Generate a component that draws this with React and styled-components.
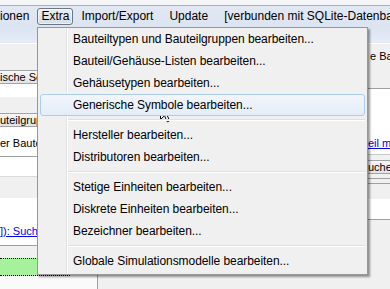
import React from 'react';
import styled, { createGlobalStyle, css } from 'styled-components';

const GlobalStyle = createGlobalStyle`
  html, body { margin: 0; padding: 0; }
  body {
    width: 390px; height: 289px; overflow: hidden; background: #f0f0f0;
    font-family: "Liberation Sans", Arial, sans-serif;
  }
  * { box-sizing: border-box; }
`;

const Screen = styled.div`
  position: relative;
  width: 390px;
  height: 289px;
  overflow: hidden;
  display: flex;
  flex-direction: column;
  background: #f0f0f0;
`;

const TitleEdge = styled.div`
  height: 6px;
  flex: none;
  background: #f4f5f7;
  border-bottom: 1px solid #a9b1bd;
`;

const Header = styled.div`
  height: 38px;
  flex: none;
  background: linear-gradient(to bottom, #e1e8f3 0%, #dce4f1 55%, #e5ebf6 100%);
  border-bottom: 1px solid #ffffff;
`;

const MenuBar = styled.div`
  height: 20px;
  padding-top: 2px;
  display: flex;
  align-items: flex-start;
  white-space: nowrap;
`;

const BarItem = styled.div`
  flex: none;
  height: 17px;
  line-height: 15px;
  padding: 0 7px;
  border: 1px solid transparent;
  border-radius: 3px;
  font-size: 12px;
  color: #000;
  ${(p) => p.$lead && css`margin-left: -8px;`}
  ${(p) =>
    p.$open &&
    css`
      padding: 0 3px;
      border-color: #6c7786;
      background: linear-gradient(to bottom, #e9eef5, #d6dde8);
      box-shadow: inset 0 0 0 1px rgba(255, 255, 255, 0.55);
    `}
`;

const Body = styled.div`
  flex: 1;
  display: grid;
  grid-template-columns: 97px 1fr 22px;
  min-height: 0;
  font-size: 11px;
  color: #000;
`;

const Column = styled.div`
  display: flex;
  flex-direction: column;
  overflow: hidden;
  white-space: nowrap;
`;

const Middle = styled.div`
  border-left: 1px solid #a0a0a0;
  background: #f0f0f0;
`;

const Gap = styled.div`
  flex: none;
  height: ${(p) => p.$h}px;
  background: ${(p) => p.$bg || '#f0f0f0'};
`;

const HeadCell = styled.div`
  flex: none;
  height: 14px;
  line-height: 12px;
  padding-left: ${(p) => p.$indent || 0}px;
  background: linear-gradient(to bottom, #f7f7f7, #e2e2e2);
  border-top: 1px solid #a3a3a3;
  border-bottom: 1px solid #a3a3a3;
`;

const Field = styled.div`
  flex: none;
  height: ${(p) => p.$h}px;
  padding-top: ${(p) => p.$pt || 0}px;
  padding-left: ${(p) => p.$indent || 0}px;
  line-height: 13px;
  background: ${(p) => p.$bg || '#ffffff'};
  border-bottom: 1px solid ${(p) => p.$line || '#a0a0a0'};
  ${(p) => p.$topLine && css`border-top: 1px solid ${p.$topLine};`}
`;

const Link = styled.span`
  color: #0000ee;
  text-decoration: underline;
`;

const ProgressRow = styled.div`
  flex: none;
  height: 18px;
  background: #f0f0f0;
  display: flex;
`;

const ProgressFill = styled.div`
  height: 100%;
  background: #a6f29c;
  border-top: 1px dotted #000;
  border-bottom: 1px dotted #000;
`;

const Rest = styled.div`
  flex: 1;
  background: ${(p) => p.$bg || '#f0f0f0'};
`;

const Dropdown = styled.div`
  position: absolute;
  left: 37px;
  top: 27px;
  width: 331px;
  padding: 0 2px 2px 2px;
  border: 1px solid #979797;
  background: #f0f0f0;
  box-shadow: 2px 2px 2px rgba(0, 0, 0, 0.4);
  font-size: 12px;
  letter-spacing: -0.06px;
  color: #000;
  white-space: nowrap;
  &::before {
    content: '';
    position: absolute;
    top: 0;
    bottom: 0;
    left: 28px;
    width: 1px;
    background: #e2e3e3;
    box-shadow: 1px 0 0 #ffffff;
  }
`;

const Entry = styled.div`
  position: relative;
  z-index: 1;
  height: 22px;
  display: flex;
  align-items: center;
  padding-left: 32px;
  border: 1px solid transparent;
  border-radius: 3px;
  ${(p) =>
    p.$hover &&
    css`
      border-color: #aeccf0;
      background: linear-gradient(to bottom, #f2f6fc, #e3ecf8);
    `}
`;

const Separator = styled.div`
  position: relative;
  z-index: 1;
  height: 8px;
  margin-left: 28px;
  &::after {
    content: '';
    position: absolute;
    left: 0;
    right: 0;
    top: 3px;
    height: 1px;
    background: #e0e0e0;
    box-shadow: 0 1px 0 #ffffff;
  }
`;

const Pointer = styled.svg`
  position: absolute;
  left: 160px;
  top: 103px;
  width: 13px;
  height: 20px;
`;

const menu = [
  ['Bauteiltypen und Bauteilgruppen bearbeiten...'],
  ['Bauteil/Gehäuse-Listen bearbeiten...'],
  ['Gehäusetypen bearbeiten...'],
  ['Generische Symbole bearbeiten...', true],
  null,
  ['Hersteller bearbeiten...'],
  ['Distributoren bearbeiten...'],
  null,
  ['Stetige Einheiten bearbeiten...'],
  ['Diskrete Einheiten bearbeiten...'],
  ['Bezeichner bearbeiten...'],
  null,
  ['Globale Simulationsmodelle bearbeiten...'],
];

export default function App() {
  return (
    <Screen>
      <GlobalStyle />
      <TitleEdge />
      <Header>
        <MenuBar>
          <BarItem $lead>ionen</BarItem>
          <BarItem $open>Extra</BarItem>
          <BarItem>Import/Export</BarItem>
          <BarItem>Update</BarItem>
          <BarItem>[verbunden mit SQLite-Datenbank]</BarItem>
        </MenuBar>
      </Header>
      <Body>
        <Column>
          <Gap $h={26} />
          <HeadCell>ische Sc</HeadCell>
          <Gap $h={13} $bg="#ffffff" />
          <Gap $h={16} />
          <HeadCell $indent={-4}>uteilgrup</HeadCell>
          <Field $h={30} $pt={10}>er Baute</Field>
          <Field $h={20} $line="#dadada" />
          <Gap $h={21} />
          <Field $h={48} $pt={27}>
            <Link>]): Suche</Link>
          </Field>
          <Gap $h={12} />
          <ProgressRow>
            <ProgressFill style={{ width: '70px' }} />
          </ProgressRow>
          <Rest $bg="#fafafa" />
        </Column>
        <Middle />
        <Column>
          <Field $h={45} $pt={6} $indent={2} $bg="#f0f0f0">e Ba</Field>
          <Field $h={66} $pt={48} $line="#c8c8c8">
            <Link>eil m</Link>
          </Field>
          <Gap $h={5} />
          <HeadCell>uche</HeadCell>
          <Gap $h={4} />
          <Field $h={6} $bg="#f0f0f0" $topLine="#a0a0a0" />
          <Gap $h={15} />
          <Field $h={21} />
          <Rest />
        </Column>
      </Body>
      <Dropdown>
        {menu.map((m, i) =>
          m ? (
            <Entry key={i} $hover={m[1]}>
              {m[0]}
            </Entry>
          ) : (
            <Separator key={i} />
          )
        )}
      </Dropdown>
      <Pointer viewBox="0 0 13 20">
        <path
          d="M0.5 0.5 L0.5 16.5 L4.5 12.7 L7.3 18.8 L9.6 17.8 L6.9 11.8 L11.8 11.8 Z"
          fill="#ffffff"
          stroke="#000000"
          strokeWidth="1"
          strokeLinejoin="miter"
        />
      </Pointer>
    </Screen>
  );
}
